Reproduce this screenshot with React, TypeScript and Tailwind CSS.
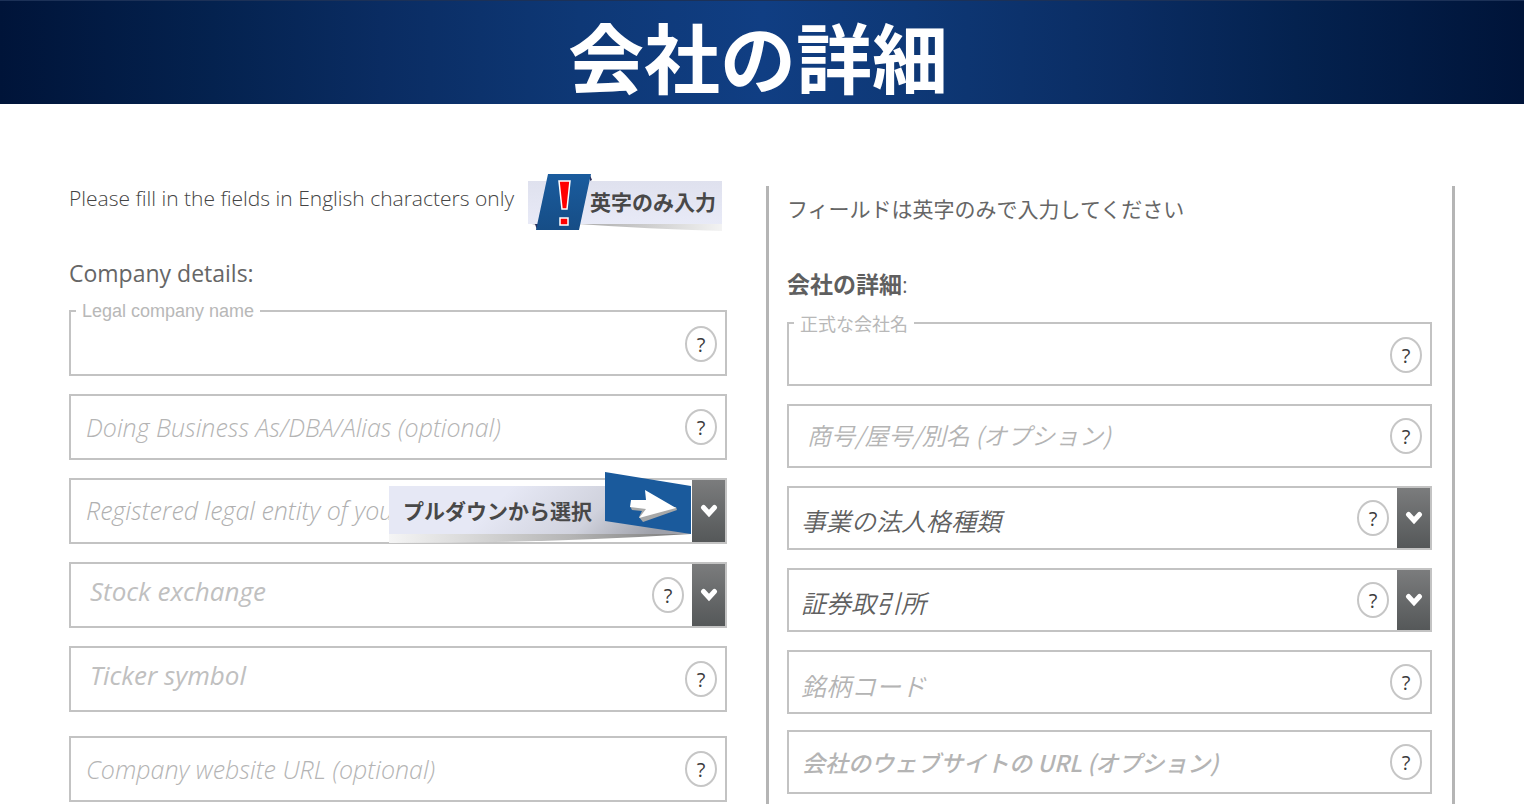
import React from 'react';

type FieldProps = {
  id: string;
  label: string;
  size: 'lg' | 'md';
  textClass: string;
  kind?: 'input' | 'select';
  hideHelp?: boolean;
  children?: React.ReactNode;
};

const HelpButton: React.FC = () => (
  <button
    type="button"
    aria-label="Help"
    className="flex h-9 w-8 shrink-0 items-center justify-center rounded-[50%] border-2 border-[#c6c6c6] bg-white pt-0.5 font-['Open_Sans',sans-serif] text-xl text-[#3c3c3c]"
  >
    ?
  </button>
);

const Chevron: React.FC = () => (
  <span className="pointer-events-none flex w-[33px] shrink-0 items-center justify-center self-stretch bg-linear-to-b from-[#7b7c7d] to-[#555859]">
    <svg width="18" height="14" viewBox="0 0 18 14" fill="none" aria-hidden="true">
      <path d="M3.5 3.5 L9 9.5 L14.5 3.5" stroke="#fff" strokeWidth="5" strokeLinecap="round" />
    </svg>
  </span>
);

const Field: React.FC<FieldProps> = ({ id, label, size, textClass, kind = 'input', hideHelp, children }) => (
  <div className={`relative flex items-center border-2 border-[#c3c3c3] bg-white ${size === 'lg' ? 'h-[66px]' : 'h-16'}`}>
    {kind === 'select' ? (
      <select
        id={id}
        aria-label={label}
        className={`h-full min-w-0 flex-1 appearance-none bg-transparent italic outline-none ${textClass}`}
      >
        <option>{label}</option>
      </select>
    ) : (
      <input
        id={id}
        type="text"
        aria-label={label}
        placeholder={label}
        className={`h-full min-w-0 flex-1 bg-transparent italic outline-none placeholder:text-[#b4b4b4] ${textClass}`}
      />
    )}
    {!hideHelp && (
      <div className="flex px-2">
        <HelpButton />
      </div>
    )}
    {kind === 'select' && <Chevron />}
    {children}
  </div>
);

const LegendField: React.FC<{ id: string; label: string; size: 'lg' | 'md'; legendClass: string }> = ({
  id,
  label,
  size,
  legendClass,
}) => (
  <fieldset className="min-w-0 border-2 border-[#c3c3c3]">
    <legend className={`ml-[5px] px-1.5 text-[#b8b8b8] ${legendClass}`}>
      <label htmlFor={id} className="block">
        {label}
      </label>
    </legend>
    <div className={`flex items-center ${size === 'lg' ? 'h-[53px]' : 'h-[51px]'}`}>
      <input id={id} type="text" className="h-full min-w-0 flex-1 bg-transparent px-4 text-xl outline-none" />
      <div className="flex px-2 pb-2">
        <HelpButton />
      </div>
    </div>
  </fieldset>
);

const EnglishOnlyBadge: React.FC = () => (
  <div className="relative flex h-[57px] w-[194px] shrink-0 items-center justify-end pr-[6px]">
    <svg className="absolute inset-0" width="194" height="57" viewBox="0 0 194 57" aria-hidden="true">
      <defs>
        <linearGradient id="ribbon" x1="0" y1="0" x2="0" y2="1">
          <stop offset="0" stopColor="#dfe1ee" />
          <stop offset="1" stopColor="#e8eaf7" />
        </linearGradient>
        <linearGradient id="ribbonShade" x1="0" y1="0" x2="1" y2="0">
          <stop offset="0" stopColor="#aaa" />
          <stop offset="1" stopColor="#f3f3f3" />
        </linearGradient>
        <linearGradient id="tab" x1="0" y1="0" x2="0" y2="1">
          <stop offset="0" stopColor="#1a5c9e" />
          <stop offset="1" stopColor="#164d86" />
        </linearGradient>
      </defs>
      <path d="M50 49 H194 V57 Q120 55 50 50 Z" fill="url(#ribbonShade)" />
      <path d="M0 49 H8 V51 Z" fill="#aaa" />
      <rect y="7" width="194" height="43" fill="url(#ribbon)" />
      <path d="M62 1 L64 6 L62 7 Z M7 50 H12 L9 56 Z" fill="#2a2f5c" />
      <path d="M20 0 H63 L51 56 H8 Z" fill="url(#tab)" />
      <path d="M31 7 H42 L39 35 H34 Z M32 44 H40 V51 H32 Z" fill="#f00" stroke="#fff" strokeWidth="1.5" />
    </svg>
    <span className="relative pb-1 font-['Noto_Sans_CJK_JP',sans-serif] text-[21px] leading-[54px] font-bold text-[#484848]">
      英字のみ入力
    </span>
  </div>
);

const DropdownHint: React.FC = () => (
  <div className="absolute -top-2 right-[34px] flex h-[73px] w-[302px] items-center pl-[14px]">
    <svg className="absolute inset-0" width="302" height="73" viewBox="0 0 302 73" aria-hidden="true">
      <defs>
        <linearGradient id="hint" x1="0" y1="0" x2="1" y2="0.16">
          <stop offset="0.4" stopColor="#e6e8f5" />
          <stop offset="0.75" stopColor="#d0d2dd" />
          <stop offset="1" stopColor="#9fa1aa" />
        </linearGradient>
        <linearGradient id="hintShade" x1="0" y1="0" x2="1" y2="0">
          <stop offset="0" stopColor="#f5f5f5" />
          <stop offset="0.6" stopColor="#b5b5b5" />
          <stop offset="1" stopColor="#777" />
        </linearGradient>
      </defs>
      <path d="M0 62 H302 Q160 71 0 71 Z" fill="url(#hintShade)" />
      <rect y="14" width="302" height="48" fill="url(#hint)" />
      <path d="M216 0 L302 14 V62 L216 49 Z" fill="#1a5a9c" />
      <path d="M241 34 L243 38 L253 39 L250 45 L254 50 L288 38 L287 35 Z" fill="#a7a8a8" />
      <path d="M242 28 L257 28 L256 18 L287 36 L250 46 L257 37 L241 35 Z" fill="#fff" />
    </svg>
    <span className="relative pt-1 font-['Noto_Sans_CJK_JP',sans-serif] text-[21px] leading-[69px] font-bold text-[#484848]">
      プルダウンから選択
    </span>
  </div>
);

const enText = "pl-[15px] font-['Open_Sans',sans-serif] text-[25px] font-light text-[#b0b0b0] placeholder:text-[#b0b0b0]";
const enTextAlt = "pl-[19px] pb-2 font-['Open_Sans',sans-serif] text-[26px] text-[#c0c0c0] placeholder:text-[#c0c0c0]";
const jpText = "pl-3 pt-[6px] font-['Noto_Sans_CJK_JP',sans-serif] text-[25px] font-[350] text-[#606060]";

export default function App() {
  return (
    <div className="bg-white">
      <header className="flex h-[104px] items-center justify-center border-t border-[#1c3157] bg-[linear-gradient(to_right,#001439_0%,#04224f_14%,#0a2c62_25%,#0e3876_38%,#103e83_50%,#0e3876_60%,#0a2c62_74%,#04224f_85%,#001439_100%)]">
        <h1 className="pt-1 pr-2 font-['Noto_Sans_CJK_JP',sans-serif] text-[76px] leading-[104px] font-bold text-white">
          会社の詳細
        </h1>
      </header>

      <main className="grid grid-cols-[minmax(0,658fr)_minmax(0,689fr)] items-start gap-[39px] px-[69px] pt-[70px] pb-2">
        <form>
          <div className="flex items-start justify-between pr-[5px]">
            <p className="font-['Open_Sans',sans-serif] text-[21px] leading-[48px] font-light whitespace-nowrap text-[#444]">
              Please fill in the fields in English characters only
            </p>
            <EnglishOnlyBadge />
          </div>
          <h2 className="mt-[22px] mb-2 font-['Open_Sans',sans-serif] text-[23px] leading-10 font-normal text-[#666]">
            Company details:
          </h2>
          <LegendField
            id="legal-name"
            label="Legal company name"
            size="lg"
            legendClass="font-['Liberation_Sans',sans-serif] text-lg leading-5"
          />
          <div className="mt-[18px] flex flex-col gap-[18px]">
            <Field id="dba" label="Doing Business As/DBA/Alias (optional)" size="lg" textClass={enText} />
            <Field
              id="entity"
              label="Registered legal entity of your business"
              size="lg"
              kind="select"
              textClass={enText}
              hideHelp
            >
              <DropdownHint />
            </Field>
            <Field id="exchange" label="Stock exchange" size="lg" kind="select" textClass={enTextAlt} />
            <Field id="ticker" label="Ticker symbol" size="lg" textClass={enTextAlt} />
          </div>
          <div className="mt-6">
            <Field id="website" label="Company website URL (optional)" size="lg" textClass={enText} />
          </div>
        </form>

        <form className="mt-3 border-x-3 border-[#b5b5b5] pr-5 pb-[10px] pl-[18px] font-['Noto_Sans_CJK_JP',sans-serif]">
          <p className="text-[21px] leading-[44px] text-[#666]">フィールドは英字のみで入力してください</p>
          <h2 className="mt-[33px] mb-[10px] text-[23px] leading-10 font-bold text-[#5f5f5f]">
            会社の詳細<span className="font-light">:</span>
          </h2>
          <LegendField id="legal-name-jp" label="正式な会社名" size="md" legendClass="text-lg leading-5" />
          <div className="mt-[18px] flex flex-col gap-[18px]">
            <Field
              id="dba-jp"
              label="商号/屋号/別名 (オプション)"
              size="md"
              textClass="pl-[18px] pb-1 text-2xl font-[350]"
            />
            <Field id="entity-jp" label="事業の法人格種類" size="md" kind="select" textClass={jpText} />
            <Field id="exchange-jp" label="証券取引所" size="md" kind="select" textClass={jpText} />
            <Field id="ticker-jp" label="銘柄コード" size="md" textClass={jpText} />
          </div>
          <div className="mt-4">
            <Field
              id="website-jp"
              label="会社のウェブサイトの URL (オプション)"
              size="md"
              textClass="pl-[13px] text-[23px] font-medium"
            />
          </div>
        </form>
      </main>
    </div>
  );
}
